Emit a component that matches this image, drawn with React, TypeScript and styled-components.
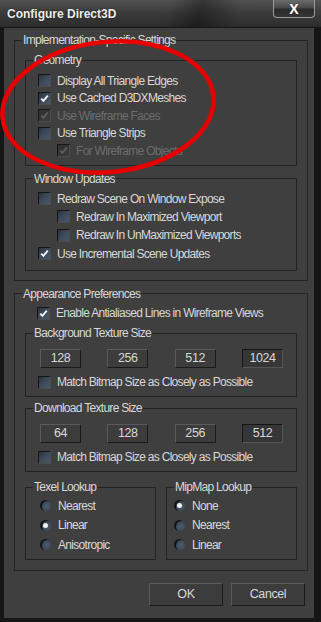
import React from "react";
import styled, { createGlobalStyle } from "styled-components";

const UI_FONT = `"Liberation Sans", Arial, sans-serif`;

const GlobalStyle = createGlobalStyle`
  html, body {
    margin: 0;
    padding: 0;
    background: #000;
  }
`;

const Window = styled.div`
  position: relative;
  width: 321px;
  height: 622px;
  display: flex;
  flex-direction: column;
  background: #161616;
  overflow: hidden;
  font-family: ${UI_FONT};
  font-size: 12px;
  letter-spacing: -0.7px;
  color: #d8d8d8;
`;

const TitleBar = styled.div`
  height: 27px;
  display: flex;
  justify-content: space-between;
  align-items: flex-start;
  padding-left: 7px;
  letter-spacing: 0;
  background:
    linear-gradient(105deg, rgba(0, 0, 0, 0) 52%, rgba(0, 0, 0, 0.35) 62%, rgba(0, 0, 0, 0) 74%),
    linear-gradient(180deg, #535353 0%, #3c3c3c 45%, #2c2c2c 100%);
`;

const Title = styled.div`
  font-weight: bold;
  font-size: 12px;
  line-height: 29px;
  color: #ececec;
  text-shadow: 0 0 2px rgba(0, 0, 0, 0.6);
`;

const CloseButton = styled.button`
  width: 42px;
  height: 18px;
  margin-right: 6px;
  padding: 0;
  border: 1px solid #9a9a9a;
  border-top: 0;
  border-radius: 0 0 4px 4px;
  background: linear-gradient(180deg, #6c6c6c 0%, #484848 45%, #2b2b2b 55%, #353535 100%);
  color: #fff;
  font-family: ${UI_FONT};
  font-weight: bold;
  font-size: 14px;
  line-height: 16px;
`;

const Client = styled.div`
  flex: 1;
  margin: 1px 7px 4px 4px;
  padding: 5px 6px 0 10px;
  background: #3f3f3f;
  display: flex;
  flex-direction: column;
`;

const Group = styled.fieldset<{ $pad: string; $mt?: number; $mx?: number }>`
  margin: ${(p) => p.$mt ?? 0}px ${(p) => p.$mx ?? 0}px 0;
  padding: ${(p) => p.$pad};
  border: 1px solid #232323;
  min-width: 0;
  display: flex;
  flex-direction: column;
`;

const Legend = styled.legend`
  margin-left: 7px;
  padding: 0 1px;
  line-height: 14px;
  color: #d8d8d8;
`;

const CheckRow = styled.label<{ $indent?: number; $disabled?: boolean; $h?: number }>`
  height: ${(p) => p.$h ?? 17.5}px;
  display: flex;
  align-items: center;
  gap: 6px;
  padding-left: ${(p) => p.$indent ?? 12}px;
  color: ${(p) => (p.$disabled ? "#6c6c6c" : "#d8d8d8")};
  white-space: nowrap;
`;

const Box = styled.span<{ $disabled?: boolean }>`
  width: 13px;
  height: 13px;
  box-sizing: border-box;
  flex: none;
  display: flex;
  align-items: center;
  justify-content: center;
  border: 1px solid;
  border-color: #161616 #4c4c4c #4c4c4c #161616;
  background: ${(p) =>
    p.$disabled
      ? "linear-gradient(135deg, #303030, #3c3c3c)"
      : "linear-gradient(135deg, #28313c 0%, #3b495a 45%, #485769 100%)"};
`;

const TexRow = styled.div`
  display: flex;
  justify-content: space-between;
  padding: 0 13px 0 14px;
  margin-bottom: 6px;
`;

const TexButton = styled.button<{ $pressed?: boolean }>`
  width: 41px;
  height: 19px;
  padding: 0;
  border: 1px solid;
  border-color: ${(p) => (p.$pressed ? "#161616 #555 #555 #161616" : "#5a5a5a #1a1a1a #1a1a1a #5a5a5a")};
  background: ${(p) => (p.$pressed ? "#363636" : "#3c3c3c")};
  color: #d8d8d8;
  font-family: ${UI_FONT};
  font-size: 12.5px;
  letter-spacing: -0.4px;
  line-height: 17px;
`;

const LookupRow = styled.div`
  display: flex;
  gap: 10px;
  margin: 8px 10px 0;
`;

const LookupGroup = styled(Group)`
  flex: 1;
`;

const RadioRow = styled.label<{ $indent: number }>`
  height: 19.5px;
  display: flex;
  align-items: center;
  gap: 7px;
  padding-left: ${(p) => p.$indent}px;
  white-space: nowrap;
`;

const RadioDot = styled.span<{ $on?: boolean }>`
  width: 11px;
  height: 11px;
  flex: none;
  border-radius: 50%;
  display: flex;
  align-items: center;
  justify-content: center;
  background: radial-gradient(circle at 62% 58%, #4b5c70 0%, #3a4757 55%, #27303b 100%);
  box-shadow: inset 2px 1px 0 #141414;
  &::after {
    content: "";
    display: ${(p) => (p.$on ? "block" : "none")};
    width: 5px;
    height: 5px;
    border-radius: 50%;
    background: #f0f0f0;
  }
`;

const ButtonRow = styled.div`
  display: flex;
  justify-content: flex-end;
  gap: 8px;
  margin-top: 12px;
  padding-right: 3px;
`;

const DialogButton = styled.button`
  width: 74px;
  height: 23px;
  padding: 0;
  border: 1px solid;
  border-color: #5a5a5a #1a1a1a #1a1a1a #5a5a5a;
  background: #3c3c3c;
  color: #d8d8d8;
  font-family: ${UI_FONT};
  font-size: 12.5px;
  letter-spacing: -0.4px;
`;

const Annotation = styled.svg`
  position: absolute;
  left: 0;
  top: 0;
  pointer-events: none;
`;

type CheckProps = {
  label: string;
  checked?: boolean;
  disabled?: boolean;
  indent?: number;
  h?: number;
};

const Check = ({ label, checked, disabled, indent, h }: CheckProps) => (
  <CheckRow $indent={indent} $disabled={disabled} $h={h}>
    <Box $disabled={disabled}>
      {checked && (
        <svg width="9" height="9" viewBox="0 0 9 9">
          <path
            d="M1.2 4.6 L3.4 6.9 L7.8 1.6"
            fill="none"
            stroke={disabled ? "#5e5e5e" : "#f4f4f4"}
            strokeWidth="1.8"
          />
        </svg>
      )}
    </Box>
    {label}
  </CheckRow>
);

const Radio = ({ label, on, indent }: { label: string; on?: boolean; indent: number }) => (
  <RadioRow $indent={indent}>
    <RadioDot $on={on} />
    {label}
  </RadioRow>
);

const TextureGroup = ({ title, sizes, mt }: { title: string; sizes: number[]; mt: number }) => (
  <Group $pad="8.5px 0 5px" $mt={mt} $mx={10}>
    <Legend>{title}</Legend>
    <TexRow>
      {sizes.map((s, i) => (
        <TexButton key={s} $pressed={i === sizes.length - 1}>
          {s}
        </TexButton>
      ))}
    </TexRow>
    <Check label="Match Bitmap Size as Closely as Possible" />
  </Group>
);

const App = () => {
  return (
    <Window>
      <GlobalStyle />
      <TitleBar>
        <Title>Configure Direct3D</Title>
        <CloseButton>X</CloseButton>
      </TitleBar>
      <Client>
        <Group $pad="6px 0 9px">
          <Legend>Implementation-Specific Settings</Legend>
          <Group $pad="5px 0 5px" $mx={10}>
            <Legend>Geometry</Legend>
            <Check label="Display All Triangle Edges" />
            <Check label="Use Cached D3DXMeshes" checked />
            <Check label="Use Wireframe Faces" checked disabled />
            <Check label="Use Triangle Strips" />
            <Check label="For Wireframe Objects" checked disabled indent={31} />
          </Group>
          <Group $pad="4px 0 7px" $mt={6} $mx={10}>
            <Legend>Window Updates</Legend>
            <Check label="Redraw Scene On Window Expose" h={18.3} />
            <Check label="Redraw In Maximized Viewport" indent={31} h={18.3} />
            <Check label="Redraw In UnMaximized Viewports" indent={31} h={18.3} />
            <Check label="Use Incremental Scene Updates" checked h={18.3} />
          </Group>
        </Group>
        <Group $pad="4px 0 10px" $mt={6}>
          <Legend>Appearance Preferences</Legend>
          <Check label="Enable Antialiased Lines in Wireframe Views" checked indent={22} />
          <TextureGroup title="Background Texture Size" sizes={[128, 256, 512, 1024]} mt={4} />
          <TextureGroup title="Download Texture Size" sizes={[64, 128, 256, 512]} mt={4} />
          <LookupRow>
            <LookupGroup $pad="2px 0 4px">
              <Legend>Texel Lookup</Legend>
              <Radio label="Nearest" indent={14} />
              <Radio label="Linear" on indent={14} />
              <Radio label="Anisotropic" indent={14} />
            </LookupGroup>
            <LookupGroup $pad="2px 0 4px">
              <Legend>MipMap Lookup</Legend>
              <Radio label="None" on indent={7} />
              <Radio label="Nearest" indent={7} />
              <Radio label="Linear" indent={7} />
            </LookupGroup>
          </LookupRow>
        </Group>
        <ButtonRow>
          <DialogButton>OK</DialogButton>
          <DialogButton>Cancel</DialogButton>
        </ButtonRow>
      </Client>
      <Annotation width="321" height="622" viewBox="0 0 321 622">
        <ellipse
          cx="108"
          cy="107"
          rx="106"
          ry="65"
          transform="rotate(-6 108 107)"
          fill="none"
          stroke="#e80000"
          strokeWidth="4.5"
        />
      </Annotation>
    </Window>
  );
};

export default App;
